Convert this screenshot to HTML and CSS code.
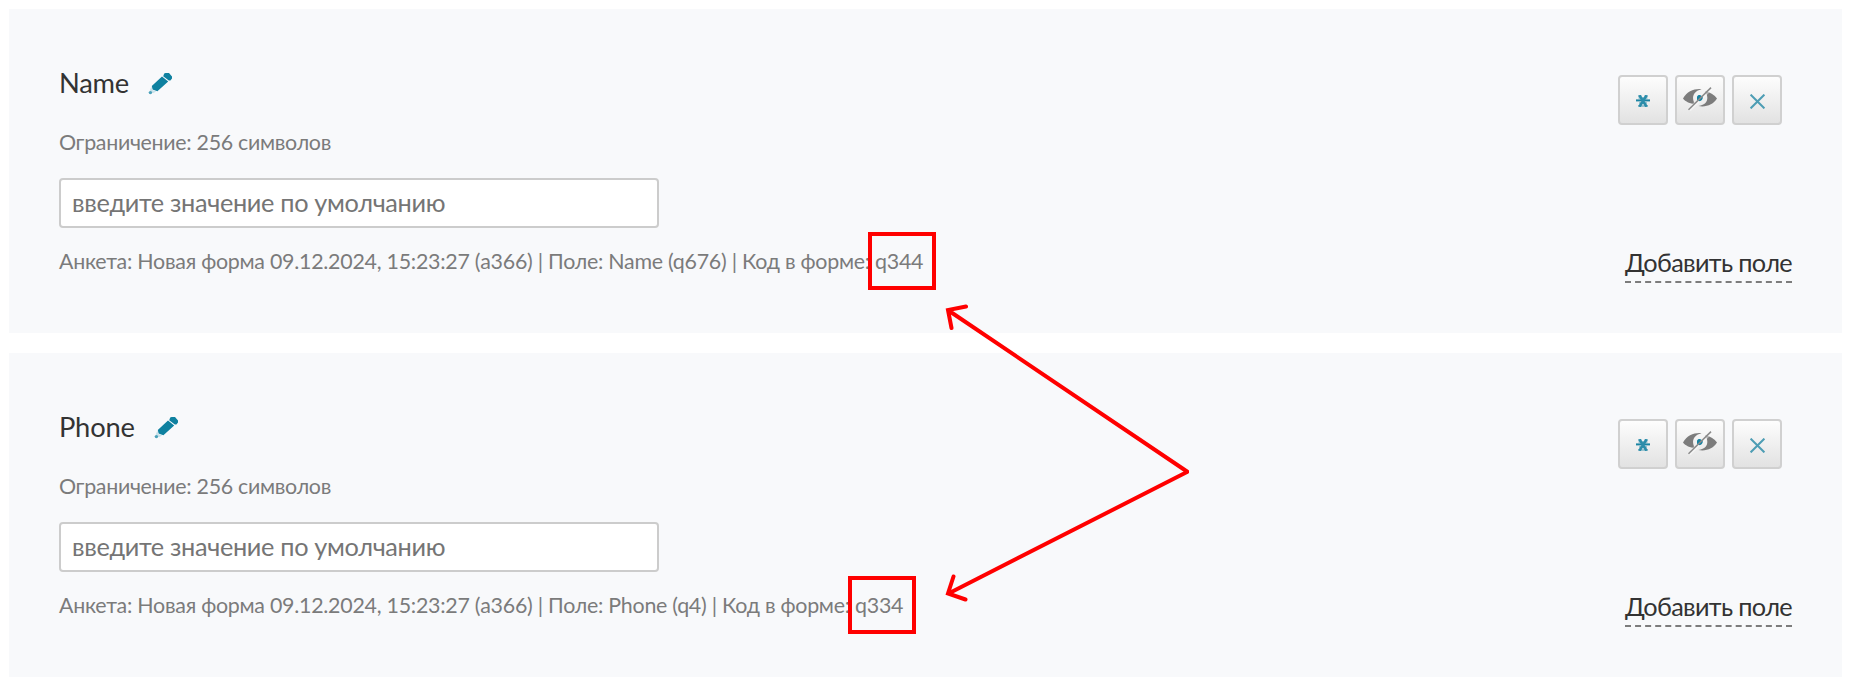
FILE: index.html
```
<!DOCTYPE html>
<html lang="ru">
<head>
<meta charset="utf-8">
<title>Поля формы</title>
<link rel="stylesheet" href="styles.css">
</head>
<body>
<svg class="sprite" aria-hidden="true">
  <symbol id="pencil" viewBox="0 0 24 23">
    <path fill="#0f81a0" d="M16.2.6 17.6 0H21L24 3.6V5.400L22.400 7.400 20.800 7.600 15.200 3.200zM14 3.600 20.200 8.400 9.400 18.300 4.600 16.600 3.800 13z"/>
    <path fill="#8fc6d5" d="M3.400 13.400 4.200 17 8.200 18.600 5 20.300 1.800 17.400z" opacity=".45"/>
    <circle cx="2.400" cy="19.600" r="1.700" fill="#4ba2ba"/>
  </symbol>
  <symbol id="required" viewBox="0 0 14 12">
    <path fill="none" stroke="#1b84a3" stroke-width="2" d="M0 5.400h14"/>
    <path fill="none" stroke="#2c8dab" stroke-width="2.600" d="M3.400.2 10.600 11.800M10.600.2 3.400 11.800"/>
    <path fill="none" stroke="#2c8dab" stroke-width="1.400" opacity=".55" d="M2 .9h3.500M8.500.9H12M2 11h10M2.500 3h9M3 8h8"/>
  </symbol>
  <symbol id="hidden" viewBox="0 0 34 24">
    <path fill="#7c7c7c" d="M0 11.500C4 4.500 11 1.600 18.500 2.200 12 3.600 9.400 8 10.200 12.500c.3 2 1 3.400 2.200 4.600C7 17 2.500 14.600 0 11.500z"/>
    <path fill="#7c7c7c" d="M34 11.500C30.500 17.500 23 20.500 15.500 19 22 18 24.500 14.500 24.300 10.500 24.200 8 23.500 6 22 4.200 27.500 5 31.500 8 34 11.500z"/>
    <path fill="none" stroke="#fff" stroke-width="4" opacity=".45" d="M6 23 28 1"/>
    <path fill="#1682a1" d="M14 10c.4-1.700 2-2.300 3.500-1.800l2.300 1.600c.2 2.700-1.300 4.600-4 4.300L14 12.700z"/>
    <path fill="none" stroke="#8b8b8b" stroke-width="1.600" d="M5.500 22.800 28 .6"/>
  </symbol>
  <symbol id="remove" viewBox="0 0 15 15">
    <path fill="none" stroke="#4d9db4" stroke-width="2" d="M.6.6 14.400 14.400M14.400.6.6 14.400"/>
  </symbol>
</svg>

<main class="fields">
  <section class="card">
    <div class="info">
      <h2 class="title"><span>Name</span><svg class="pencil"><use href="#pencil"/></svg></h2>
      <p class="limit">Ограничение: 256 символов</p>
      <input class="value" type="text" placeholder="введите значение по умолчанию">
      <p class="meta">Анкета: Новая форма 09.12.2024, 15:23:27 (a366) | Поле: Name (q676) | Код в форме: q344</p>
    </div>
    <div class="side">
      <div class="actions">
        <button class="action"><svg class="required"><use href="#required"/></svg></button>
        <button class="action"><svg class="hidden"><use href="#hidden"/></svg></button>
        <button class="action"><svg class="remove"><use href="#remove"/></svg></button>
      </div>
      <a class="add">Добавить поле</a>
    </div>
  </section>
  <section class="card">
    <div class="info">
      <h2 class="title"><span>Phone</span><svg class="pencil"><use href="#pencil"/></svg></h2>
      <p class="limit">Ограничение: 256 символов</p>
      <input class="value" type="text" placeholder="введите значение по умолчанию">
      <p class="meta">Анкета: Новая форма 09.12.2024, 15:23:27 (a366) | Поле: Phone (q4) | Код в форме: q334</p>
    </div>
    <div class="side">
      <div class="actions">
        <button class="action"><svg class="required"><use href="#required"/></svg></button>
        <button class="action"><svg class="hidden"><use href="#hidden"/></svg></button>
        <button class="action"><svg class="remove"><use href="#remove"/></svg></button>
      </div>
      <a class="add">Добавить поле</a>
    </div>
  </section>
</main>

<svg class="marks" viewBox="0 0 1854 690" aria-hidden="true">
  <rect x="870" y="234" width="64" height="54"/>
  <rect x="850" y="578" width="64" height="54"/>
  <path d="M1187 471.500 948.500 310.500M966 306.500 948 310 951.500 328"/>
  <path d="M1187 472 948.500 593.500M953.500 576.500 948 593.500 965.500 599.500"/>
</svg>
</body>
</html>
```
FILE: styles.css
```
* { box-sizing: border-box; }

body {
  margin: 0;
  background: #fff;
  color: #333;
  font-family: Lato, "Noto Sans", sans-serif;
  position: relative;
  overflow: hidden;
}

.sprite { position: absolute; width: 0; height: 0; }

.fields {
  display: flex;
  flex-direction: column;
  gap: 20px;
  padding: 9px 12px 13px 9px;
}

.card {
  display: flex;
  justify-content: space-between;
  height: 324px;
  padding: 53px 50px 0;
  background: #f8f9fb;
}

.title {
  display: flex;
  gap: 19px;
  margin: 0;
  font-size: 27.3px;
  font-weight: 400;
  letter-spacing: -0.2px;
  line-height: 41px;
}

.pencil { width: 24px; height: 23px; margin-top: 11px; }

.limit {
  margin: 24px 0 21px;
  color: #7b7b7b;
  font-size: 21.4px;
  letter-spacing: -0.3px;
  line-height: 30px;
}

.value {
  display: block;
  width: 600px;
  height: 50px;
  padding: 0 11px 3px;
  border: 2px solid #ccc;
  border-radius: 4px;
  background: #fff;
  font-family: inherit;
  font-size: 25.3px;
  letter-spacing: -0.33px;
}

.value::placeholder { color: #757575; opacity: 1; }

.meta {
  margin: 18px 0 0;
  color: #7b7b7b;
  font-size: 21.4px;
  letter-spacing: -0.26px;
  line-height: 30px;
  white-space: nowrap;
}

.side {
  display: flex;
  flex-direction: column;
  align-items: flex-end;
  padding-top: 13px;
}

.actions { display: flex; gap: 7px; margin: 0 10px 120px 0; }

.action {
  display: flex;
  align-items: flex-start;
  justify-content: center;
  width: 50px;
  height: 50px;
  padding: 0;
  border: 2px solid #d0d0d0;
  border-radius: 4px;
  background: linear-gradient(#fdfdfd, #e2e2e2);
}

.required { width: 14px; height: 12px; margin-top: 18px; }
.hidden { width: 34px; height: 24px; margin-top: 10px; }
.remove { width: 15px; height: 15px; margin-top: 17px; }

.add {
  padding-bottom: 1px;
  border-bottom: 2px dashed #7c7c7c;
  font-size: 25.3px;
  letter-spacing: -0.66px;
  line-height: 35px;
}

.marks {
  position: absolute;
  top: 0;
  left: 0;
  width: 1854px;
  height: 690px;
  fill: none;
  stroke: #f00;
  stroke-width: 4;
  stroke-linecap: round;
  pointer-events: none;
}
```
